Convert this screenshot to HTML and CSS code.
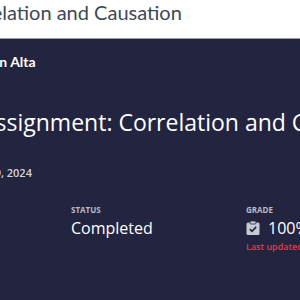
FILE: index.html
```html
<!DOCTYPE html>
<html lang="en">
<head>
    <meta charset="UTF-8">
    <meta name="viewport" content="width=device-width, initial-scale=1.0">
    <title>Assignment: Correlation and Causation</title>
    <link rel="stylesheet" href="styles.css">
</head>
<body>

    <header class="top-bar">
        <h1 class="page-title">Correlation and Causation</h1>
    </header>

    <main class="hero">
        <div class="brand">Knewton Alta</div>

        <h2 class="assignment-title">Assignment: Correlation and Causation</h2>

        <p class="due-date">Due Sep 29, 2024</p>

        <div class="stats">
            <div class="stat stat-status">
                <div class="stat-label">STATUS</div>
                <div class="stat-value">Completed</div>
            </div>
            <div class="stat stat-grade">
                <div class="stat-label">GRADE</div>
                <div class="stat-value">
                    <svg class="grade-icon" width="14" height="14" viewBox="0 0 14 14">
                        <rect x="0.5" y="1.5" width="13" height="12.5" rx="1.5" fill="#c9cad3"/>
                        <rect x="4" y="0" width="6" height="3" rx="1" fill="#c9cad3" stroke="#23243f" stroke-width="0.8"/>
                        <path d="M3.8 8.2 L6 10.3 L10.2 5.8" fill="none" stroke="#23243f" stroke-width="1.7"/>
                    </svg>
                    100%
                </div>
                <div class="stat-note">Last updated Aug 30, 2024</div>
            </div>
        </div>
    </main>

</body>
</html>
```

FILE: styles.css
```css
body {
    margin: 0;
    width: 300px;
    height: 300px;
    overflow: hidden;
    background-color: #23243f;
    font-family: "Open Sans", sans-serif;
}
.top-bar {
    background-color: #ffffff;
    height: 38px;
    border-bottom: 1px solid #9a9ca8;
    white-space: nowrap;
    overflow: hidden;
}
.page-title {
    margin: 0 0 0 -47px;
    font-family: Lato, sans-serif;
    font-weight: normal;
    font-size: 20px;
    line-height: 24px;
    color: #3e4857;
}
.hero {
    color: #ffffff;
    white-space: nowrap;
}
.brand {
    margin: 14px 0 0 -50px;
    font-family: Lato, sans-serif;
    font-weight: bold;
    font-size: 14px;
    line-height: 18px;
}
.assignment-title {
    margin: 36px 0 0 -19px;
    font-weight: normal;
    font-size: 23px;
    line-height: 30px;
}
.due-date {
    margin: 28px 0 0 -58px;
    font-size: 11px;
    font-weight: 600;
    color: #d4d5dc;
}
.stats {
    display: flex;
    margin: 24px 0 0 71px;
}
.stat-status {
    flex: 0 0 175px;
}
.stat-grade {
    flex: 0 0 auto;
}
.stat-label {
    font-size: 8px;
    font-weight: bold;
    color: #b9bac4;
    line-height: 12px;
}
.stat-value {
    display: flex;
    align-items: center;
    gap: 8px;
    font-size: 16px;
    line-height: 24px;
}
.stat-note {
    font-size: 9px;
    font-weight: 600;
    color: #dc3f4c;
}
```
